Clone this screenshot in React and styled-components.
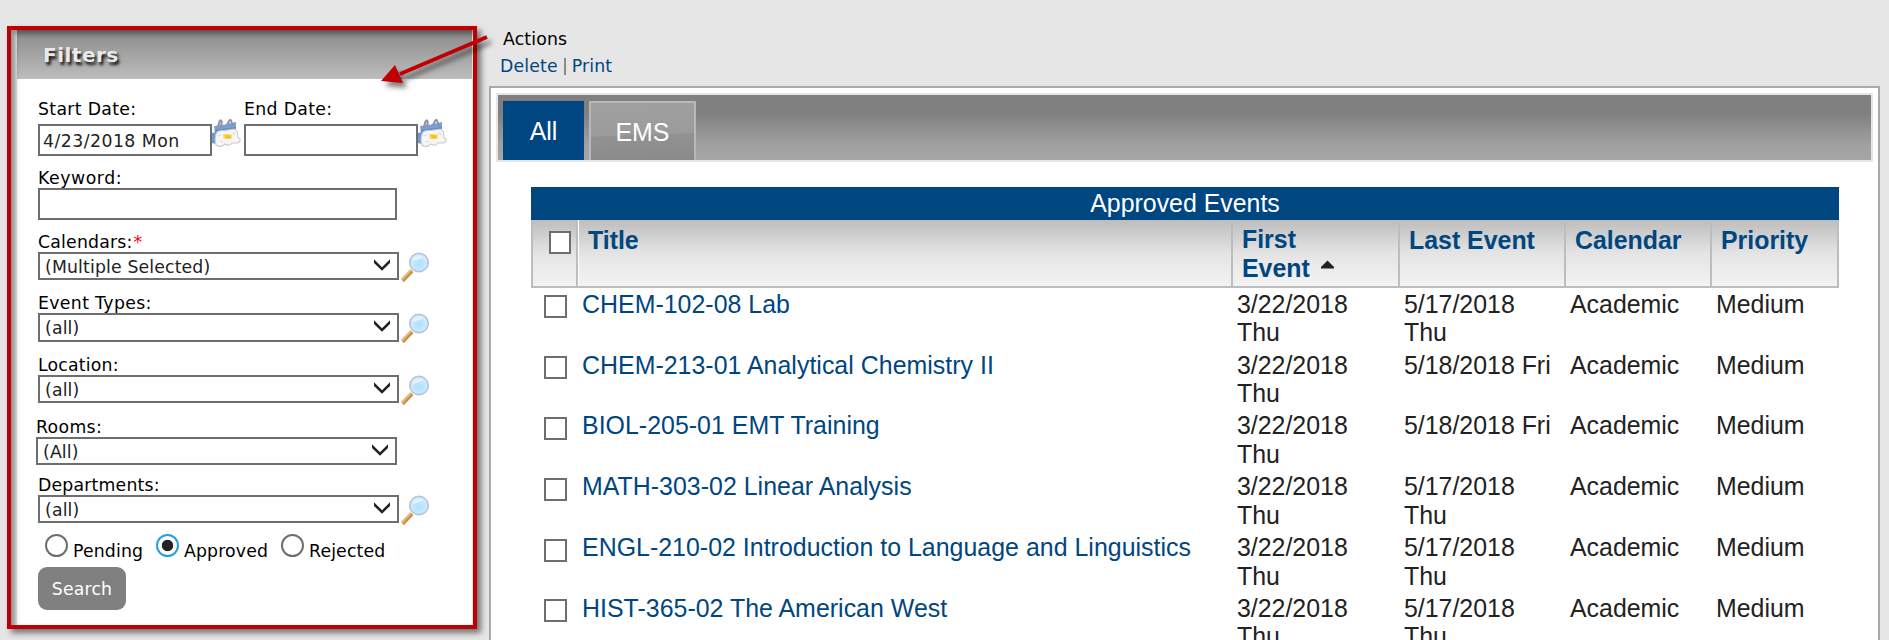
import React from "react";
import styled, { createGlobalStyle, css } from "styled-components";

const GlobalStyle = createGlobalStyle`
  * { box-sizing: border-box; }
  html, body { margin: 0; height: 640px; overflow: hidden; background: #e6e6e6; }
  body { font-family: Verdana, "DejaVu Sans", sans-serif; font-size: 17.3px; color: #000; }
  a { color: #004680; text-decoration: none; }
`;

const Page = styled.div`
  position: relative;
  display: flex;
  align-items: flex-start;
  height: 640px;
  overflow: hidden;
`;

const Sidebar = styled.aside`
  position: relative;
  flex: none;
  width: 470px;
  height: 603px;
  margin: 26px 0 0 7px;
  padding: 0 1px 0 6px;
  border: 4px solid #c00000;
  box-shadow: 4px 4px 6px rgba(0, 0, 0, 0.5);
  &::after {
    content: "";
    position: absolute;
    inset: 0;
    box-shadow: inset 4px 4px 5px rgba(0, 0, 0, 0.38);
    pointer-events: none;
  }
`;

const Panel = styled.div`
  height: 100%;
  background: #fff;
`;

const PanelTitle = styled.h2`
  margin: 0;
  height: 49px;
  padding-left: 26px;
  font-size: 20px;
  line-height: 50px;
  letter-spacing: 0.5px;
  color: #e9e9e9;
  text-shadow: 2px 3px 3px rgba(0, 0, 0, 0.9);
  background: linear-gradient(#8a8a8a, #bdbdbd);
`;

const Form = styled.div`
  padding: 21px 0 0 21px;
`;

const Field = styled.div`
  margin-top: ${(p) => p.$top || 0}px;
  margin-left: ${(p) => p.$shift || 0}px;
`;

const Label = styled.label`
  display: block;
  line-height: 19px;
  letter-spacing: ${(p) => p.$ls || 0.2}px;
  margin-bottom: ${(p) => p.$gap || 0}px;
`;

const Required = styled.span`
  color: #f00;
  margin-left: 1px;
`;

const Line = styled.div`
  display: flex;
  align-items: flex-start;
`;

const DateField = styled.div`
  width: 206px;
`;

const control = css`
  border: 2px solid #6e6e6e;
  background: #fff;
  color: #222;
  font: inherit;
`;

const TextInput = styled.input`
  ${control}
  display: block;
  flex: none;
  width: ${(p) => p.$w}px;
  height: 32px;
  padding: 1px 3px 0;
  letter-spacing: 0.47px;
  border-radius: 0;
  outline: none;
`;

const SelectBox = styled.div`
  ${control}
  display: flex;
  flex: none;
  justify-content: space-between;
  width: 361px;
  height: ${(p) => p.$h || 28}px;
  padding: 0 7px 0 5px;
  line-height: 27px;
  letter-spacing: 0.15px;
  svg { margin-top: 5px; }
`;

const IconSlot = styled.span`
  display: block;
  flex: none;
  margin: ${(p) => p.$m};
  line-height: 0;
`;

const Radios = styled.div`
  display: flex;
  margin: 11px 0 0 7px;
  height: 23px;
`;

const RadioOption = styled.label`
  display: flex;
  width: ${(p) => p.$w}px;
  line-height: 35px;
  letter-spacing: 0.15px;
  white-space: nowrap;
`;

const Radio = styled.input`
  appearance: none;
  flex: none;
  width: 23px;
  height: 23px;
  margin: 0 5px 0 0;
  border: 2px solid #6e6e6e;
  border-radius: 50%;
  background: #fff;
  &:checked {
    border-color: #26a0da;
    background: radial-gradient(circle, #222 0 5.3px, #fff 6.1px);
  }
`;

const SearchButton = styled.button`
  display: block;
  width: 88px;
  height: 43px;
  margin-top: 10px;
  padding: 0;
  border: 0;
  border-radius: 9px;
  background: #808080;
  color: #fff;
  font: inherit;
  letter-spacing: 0.15px;
`;

const Main = styled.main`
  flex: none;
  width: 1391px;
  margin-left: 12px;
  padding-top: 28px;
`;

const ActionsTitle = styled.div`
  padding-left: 14px;
  height: 27px;
  line-height: 22px;
  letter-spacing: 0.15px;
`;

const ActionLinks = styled.div`
  display: flex;
  gap: 6px;
  padding-left: 11px;
  height: 31px;
  line-height: 22px;
  letter-spacing: 0.15px;
`;

const Divider = styled.span`
  width: 2px;
  height: 17px;
  margin-top: 3px;
  background: #8a8a8a;
`;

const Content = styled.section`
  height: 600px;
  padding: 5px;
  border: 2px solid #a9a9a9;
  background: #fff;
  font-family: Arial, "Liberation Sans", sans-serif;
  font-size: 24.9px;
  line-height: 28px;
  color: #222;
`;

const TabBar = styled.nav`
  display: flex;
  gap: 5px;
  height: 69px;
  padding: 6px 5px 0;
  border: 2px solid #e6e6e6;
  background: linear-gradient(#808080 0 28%, #a0a0a0 75%, #a6a6a6);
`;

const Tab = styled.button`
  width: ${(p) => p.$w}px;
  height: 59px;
  padding: 0;
  font: inherit;
  color: #fff;
  border: ${(p) => (p.$active ? "0" : "2px solid #b8b8b8")};
  border-bottom: 0;
  background: ${(p) =>
    p.$active ? "#004680" : "linear-gradient(178deg, #a0a0a0, #9b9b9b 55%, #929292 56%, #8a8a8a)"};
`;

const Table = styled.div`
  width: 1308px;
  margin: 25px 0 0 35px;
`;

const Caption = styled.div`
  height: 33px;
  line-height: 33px;
  text-align: center;
  color: #fff;
  background: #004680;
`;

const columns = css`
  display: grid;
  grid-template-columns: 47px 655px 167px 166px 146px 127px;
`;

const HeadRow = styled.div`
  ${columns}
  height: 68px;
  border-bottom: 2px solid #bdbdbd;
  background: linear-gradient(#bdbdbd, #e4e4e4 50%, #f3f3f3);
`;

const HeadCell = styled.div`
  padding: ${(p) => (p.$up ? 4.6 : 6)}px 0 0 ${(p) => p.$pad || 9}px;
  border-right: 2px solid #bdbdbd;
  border-left: ${(p) => (p.$edge ? `${p.$edge} solid ${p.$edge === "1px" ? "#fff" : "#bdbdbd"}` : "0")};
  font-weight: bold;
  line-height: ${(p) => (p.$up ? 29 : 28)}px;
  color: #004680;
`;

const SortArrow = styled.svg`
  margin-left: 11px;
  vertical-align: 8px;
`;

const Row = styled.div`
  ${columns}
  height: 60.8px;
  line-height: 28.6px;
`;

const Body = styled.div`
  padding-top: 1.8px;
`;

const Cell = styled.div`
  padding-left: ${(p) => p.$pad || 4}px;
  padding-right: ${(p) => p.$right || 0}px;
`;

const Check = styled.input`
  appearance: none;
  display: block;
  width: ${(p) => p.$w || 23}px;
  height: 23px;
  margin: ${(p) => p.$m};
  border: 2px solid #6e6e6e;
  background: #fff;
`;

const Arrow = styled.svg`
  position: absolute;
  left: 370px;
  top: 25px;
  filter: drop-shadow(4px 5px 2.5px rgba(0, 0, 0, 0.5));
  pointer-events: none;
`;

function Chevron() {
  return (
    <svg width="16" height="12" viewBox="0 0 16 12">
      <path d="M0 0.3L8 8.2L16 0.3V3.9L8 11.8L0 3.9Z" fill="#222" />
    </svg>
  );
}

function Magnifier() {
  return (
    <svg width="28" height="30" viewBox="0 0 28 30">
      <defs>
        <radialGradient id="lens" cx="0.5" cy="0.55" r="0.55">
          <stop offset="0" stopColor="#aee0ff" />
          <stop offset="0.6" stopColor="#c3e8fe" />
          <stop offset="1" stopColor="#e3f3fd" />
        </radialGradient>
      </defs>
      <path d="M1.300 28.5L11 18.5" stroke="#e6b87c" strokeWidth="4.4" />
      <path d="M2.100 29.200L11.500 19.4" stroke="#c98f4c" strokeWidth="2.2" />
      <circle cx="18" cy="10.5" r="9.2" fill="url(#lens)" stroke="#b4c4dc" strokeWidth="1.7" />
      <path d="M11.500 9C12.5 4.5 18 2.5 22 5.2C19 7.5 15 7.5 11.5 9Z" fill="#e9f7ff" opacity="0.8" />
    </svg>
  );
}

function CalendarIcon() {
  return (
    <svg width="29" height="29" viewBox="0 0 29 29">
      <path d="M2 7L13 5.500L24 3V10L19 12L3 14Z" fill="#7ba0d6" />
      <path d="M3 11L24 8V11L3 14Z" fill="#5f8bcb" />
      <path d="M0 14L4 13V25L0 24Z" fill="#6d98d4" />
      <path d="M4.500 14Q6 11 12 11.500L23 10L25.500 13L26 19L28.300 20Q28 24 24.500 24L20 24Q17 28 13 25Q8 29.500 4 26Q2 20 4.500 14Z" fill="#f6f6f7" stroke="#cbcbd2" strokeWidth="1.1" />
      <path d="M6 8L7.500 2.500Q9 0 9.800 3L9 8M15 6L17 2Q19 -0.5 19.500 3L21 7" fill="none" stroke="#8b92a3" strokeWidth="2" />
      <path d="M11 15L20 15.200L19.500 20L11.500 20Z" fill="#f5dd6c" />
      <path d="M12.500 16L18.500 16.500L18.500 19.300L14 19Z" fill="#efc414" />
      <path d="M6 17L9 16M21 13.500L23 16M8 22L11 23" stroke="#d9dce3" strokeWidth="1.3" />
    </svg>
  );
}

function SelectField({ label, value, top, h, shift, ls, required, lookup = true }) {
  return (
    <Field $top={top} $shift={shift}>
      <Label $ls={ls}>
        {label}
        {required && <Required>*</Required>}
      </Label>
      <Line>
        <SelectBox $h={h}>
          {value}
          <Chevron />
        </SelectBox>
        {lookup && (
          <IconSlot $m="0 0 -10px 2px">
            <Magnifier />
          </IconSlot>
        )}
      </Line>
    </Field>
  );
}

function DatePicker({ label, value }) {
  return (
    <DateField>
      <Label $gap={5} $ls={0.33}>{label}</Label>
      <Line>
        <TextInput $w={174} defaultValue={value} />
        <IconSlot $m="-5px 0 0 0">
          <CalendarIcon />
        </IconSlot>
      </Line>
    </DateField>
  );
}

const events = [
  ["CHEM-102-08 Lab", "3/22/2018 Thu", "5/17/2018 Thu"],
  ["CHEM-213-01 Analytical Chemistry II", "3/22/2018 Thu", "5/18/2018 Fri"],
  ["BIOL-205-01 EMT Training", "3/22/2018 Thu", "5/18/2018 Fri"],
  ["MATH-303-02 Linear Analysis", "3/22/2018 Thu", "5/17/2018 Thu"],
  ["ENGL-210-02 Introduction to Language and Linguistics", "3/22/2018 Thu", "5/17/2018 Thu"],
  ["HIST-365-02 The American West", "3/22/2018 Thu", "5/17/2018 Thu"],
];

const EventLink = styled.a`
  letter-spacing: 0.03px;
`;

export default function App() {
  return (
    <Page>
      <GlobalStyle />
      <Sidebar>
        <Panel>
          <PanelTitle>Filters</PanelTitle>
          <Form>
            <Line>
              <DatePicker label="Start Date:" value="4/23/2018 Mon" />
              <DatePicker label="End Date:" value="" />
            </Line>
            <Field $top={13}>
              <Label $ls={0.55}>Keyword:</Label>
              <TextInput $w={359} />
            </Field>
            <SelectField label="Calendars:" value="(Multiple Selected)" top={13} required />
            <SelectField label="Event Types:" value="(all)" top={14} h={29} ls={0.35} />
            <SelectField label="Location:" value="(all)" top={14} />
            <SelectField label="Rooms:" value="(All)" top={15} shift={-2} ls={0.35} lookup={false} />
            <SelectField label="Departments:" value="(all)" top={11} />
            <Radios>
              <RadioOption $w={111}>
                <Radio type="radio" name="status" />
                Pending
              </RadioOption>
              <RadioOption $w={125}>
                <Radio type="radio" name="status" defaultChecked />
                Approved
              </RadioOption>
              <RadioOption $w={110}>
                <Radio type="radio" name="status" />
                Rejected
              </RadioOption>
            </Radios>
            <SearchButton>Search</SearchButton>
          </Form>
        </Panel>
      </Sidebar>
      <Main>
        <ActionsTitle>Actions</ActionsTitle>
        <ActionLinks>
          <a href="#delete">Delete</a>
          <Divider />
          <a href="#print">Print</a>
        </ActionLinks>
        <Content>
          <TabBar>
            <Tab $w={81} $active>All</Tab>
            <Tab $w={107}>EMS</Tab>
          </TabBar>
          <Table>
            <Caption>Approved Events</Caption>
            <HeadRow>
              <HeadCell $edge="2px" $pad={16}>
                <Check type="checkbox" $w={22} $m="5px 0 0" />
              </HeadCell>
              <HeadCell $edge="1px">Title</HeadCell>
              <HeadCell $up>
                First
                <br />
                Event
                <SortArrow width="13" height="9" viewBox="0 0 13 9">
                  <path d="M6.500 0.500L13 7V8.500H0V7Z" fill="#222" />
                </SortArrow>
              </HeadCell>
              <HeadCell>Last Event</HeadCell>
              <HeadCell>Calendar</HeadCell>
              <HeadCell>Priority</HeadCell>
            </HeadRow>
            <Body>
              {events.map(([title, first, last]) => (
                <Row key={title}>
                  <Cell $pad={13}>
                    <Check type="checkbox" $m="5.6px 0 0" />
                  </Cell>
                  <Cell $pad={4}>
                    <EventLink href="#event">{title}</EventLink>
                  </Cell>
                  <Cell $right={30}>{first}</Cell>
                  <Cell $right={12}>{last}</Cell>
                  <Cell>Academic</Cell>
                  <Cell>Medium</Cell>
                </Row>
              ))}
            </Body>
          </Table>
        </Content>
      </Main>
      <Arrow width="130" height="75" viewBox="370 25 130 75">
        <path d="M487 37L400 74" stroke="#c00000" strokeWidth="4" />
        <path d="M381 81L395 65L403 83Z" fill="#c00000" />
      </Arrow>
    </Page>
  );
}
